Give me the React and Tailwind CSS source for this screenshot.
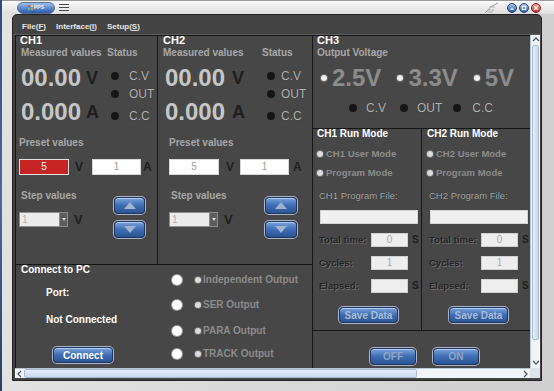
import React from 'react';

const FONT = "font-['Liberation_Sans',Arial,sans-serif]";

function Dot({ className = '' }) {
  return <span className={`block w-[8px] h-[8px] rounded-full bg-[#151515] shrink-0 ${className}`} />;
}

function SmallRadio({ className = '' }) {
  return <span className={`block w-[6px] h-[6px] rounded-full bg-[#dcdcdc] shadow-[0_0_0_1px_#6a6a6a] shrink-0 ${className}`} />;
}

function BlueButton({ className = '', textClass = 'text-white', children }) {
  return (
    <div
      className={`flex items-center justify-center rounded-[4px] border border-[#1d3560] bg-linear-to-b from-[#7aa3dc] via-[#3e6db3] to-[#2b5594] shadow-[inset_0_1px_0_#b4cdef,0_0_0_1px_#aab6c8] font-bold text-[10px] ${textClass} ${className}`}
    >
      {children}
    </div>
  );
}

function Arrow({ up }) {
  return (
    <BlueButton className="w-full h-[17px]">
      <svg width="12" height="7" viewBox="0 0 12 7">
        {up ? <polygon points="6,0 12,7 0,7" fill="#9fb3cc" /> : <polygon points="0,0 12,0 6,7" fill="#9fb3cc" />}
      </svg>
    </BlueButton>
  );
}

function Field({ value, red, className = '' }) {
  return (
    <div
      className={`h-[16px] flex items-center justify-center text-[10px] leading-none border shrink-0 ${
        red ? 'bg-[#c42424] border-[#e2e2e2] text-white' : 'bg-white border-[#d8d8d8] text-[#9c9c9c]'
      } ${className}`}
    >
      {value}
    </div>
  );
}

function Combo() {
  return (
    <div className="w-[49px] h-[15px] flex border border-[#8c8c8c] bg-[#ececec]">
      <span className="flex-1 pl-[2px] text-[10px] leading-[13px] text-[#b0b0b0]">1</span>
      <span className="w-[8px] bg-[#5c5c5c] border-l border-[#8c8c8c] flex items-center justify-center">
        <svg width="4" height="3" viewBox="0 0 4 3">
          <polygon points="0,0 4,0 2,3" fill="#e0e0e0" />
        </svg>
      </span>
    </div>
  );
}

const Label = ({ children, className = '' }) => (
  <div className={`text-[10px] font-bold text-[#a7a7a7] whitespace-nowrap ${className}`}>{children}</div>
);

const channels = {
  CH1: {
    pl: 'pl-[4px]',
    numCol: 'ml-[5px] w-[86px]',
    numRow: 'pl-0',
    unit: 'ml-[5px]',
    dot: 'ml-[4px]',
    stat: 'ml-[10px]',
    bottom: 'ml-[3px]',
    v1: 'ml-[6px]',
    f2: 'ml-[9px]',
    a: 'ml-[2px]',
    left: 'w-[95px]',
    btns: 'w-[31px]',
  },
  CH2: {
    pl: 'pl-[5px]',
    numCol: 'ml-[5px] w-[99px]',
    numRow: 'pl-[2px]',
    unit: 'ml-[7px]',
    dot: 'ml-[5px]',
    stat: 'ml-[6px]',
    bottom: 'ml-[11px]',
    v1: 'ml-[7px]',
    f2: 'ml-[6px]',
    a: 'ml-[4px]',
    left: 'w-[96px]',
    btns: 'w-[32px]',
  },
};

function Channel({ name }) {
  const c = channels[name];
  const red = name === 'CH1';
  return (
    <div className="h-full flex flex-col">
      <div className={`h-[9px] leading-[9px] text-[11px] font-bold text-white ${c.pl}`}>{name}</div>
      <div className="flex">
        <div className={`flex flex-col ${c.numCol}`}>
          <Label className="h-[16px] leading-[16px]">Measured values</Label>
          <div className={`h-[33px] flex items-center ${c.numRow}`}>
            <span className="text-[24px] leading-none font-bold text-[#c6c6c6]">00.00</span>
            <span className={`text-[18px] leading-none font-bold text-[#1e1e1e] ${c.unit}`}>V</span>
          </div>
          <div className={`h-[35px] flex items-center ${c.numRow}`}>
            <span className="text-[24px] leading-none font-bold text-[#c6c6c6]">0.000</span>
            <span className={`text-[18px] leading-none font-bold text-[#1e1e1e] ${c.unit}`}>A</span>
          </div>
        </div>
        <div className="flex flex-col">
          <Label className="h-[16px] leading-[16px]">Status</Label>
          {[
            ['C.V', 'mt-[8px]'],
            ['OUT', 'mt-[4px]'],
            ['C.C', 'mt-[8px]'],
          ].map(([t, m]) => (
            <div key={t} className={`h-[14px] flex items-center ${m}`}>
              <Dot className={c.dot} />
              <span className={`text-[12px] leading-none text-[#b4b4b4] [text-shadow:0_0_1px_#222] ${c.stat}`}>{t}</span>
            </div>
          ))}
        </div>
      </div>
      <div className={`flex flex-col ${c.bottom}`}>
        <Label className="mt-[6px] h-[16px] leading-[16px]">Preset values</Label>
        <div className="mt-[8px] flex items-center">
          <Field value="5" red={red} className="w-[50px]" />
          <span className={`text-[12px] leading-none font-bold text-[#1e1e1e] ${c.v1}`}>V</span>
          <Field value="1" className={`w-[49px] ${c.f2}`} />
          <span className={`text-[12px] leading-none font-bold text-[#1e1e1e] ${c.a}`}>A</span>
        </div>
        <div className="flex">
          <div className={`flex flex-col ${c.left}`}>
            <Label className="mt-[13px] h-[16px] leading-[16px] pl-[2px]">Step values</Label>
            <div className="mt-[8px] flex items-center">
              <Combo />
              <span className="ml-[6px] text-[13px] leading-none font-bold text-[#1e1e1e]">V</span>
            </div>
          </div>
          <div className={`flex flex-col ${c.btns}`}>
            <div className="mt-[22px]">
              <Arrow up />
            </div>
            <div className="mt-[7px]">
              <Arrow />
            </div>
          </div>
        </div>
      </div>
    </div>
  );
}

function CH3() {
  const volts = [
    ['2.5V', 'ml-[4px]'],
    ['3.3V', 'ml-[16px]'],
    ['5V', 'ml-[16px]'],
  ];
  return (
    <div className="h-[92px] flex flex-col pl-[4px]">
      <div className="h-[9px] leading-[9px] text-[11px] font-bold text-white">CH3</div>
      <Label className="h-[16px] leading-[16px]">Output Voltage</Label>
      <div className="h-[33px] flex items-center">
        {volts.map(([v, m]) => (
          <div key={v} className={`flex items-center ${m}`}>
            <SmallRadio className="bg-[#eeeeee]" />
            <span className="ml-[5px] text-[24px] leading-none font-bold text-[#8c8c8c]">{v}</span>
          </div>
        ))}
      </div>
      <div className="mt-[7px] h-[14px] flex items-center text-[12px] leading-none text-[#b4b4b4] [text-shadow:0_0_1px_#222]">
        <Dot className="ml-[32px]" />
        <span className="ml-[9px]">C.V</span>
        <Dot className="ml-[14px]" />
        <span className="ml-[9px]">OUT</span>
        <Dot className="ml-[11px]" />
        <span className="ml-[11px]">C.C</span>
      </div>
    </div>
  );
}

function RunMode({ ch, className = '' }) {
  const rows = [
    ['Total time:', '0', 'mt-[9px]'],
    ['Cycles:', '1', 'mt-[9px]'],
    ['Elapsed:', '', 'mt-[9px]'],
  ];
  return (
    <div className={`w-[108px] h-full flex flex-col ${className}`}>
      <div className="h-[9px] leading-[9px] pl-[4px] text-[10px] font-bold text-white whitespace-nowrap">{ch} Run Mode</div>
      {[
        [`${ch} User Mode`, 'mt-[8px] h-[15px]'],
        ['Program Mode', 'mt-[5px] h-[14px]'],
      ].map(([t, m]) => (
        <div key={t} className={`flex items-center pl-[4px] ${m}`}>
          <SmallRadio className="bg-[#cfcfcf]" />
          <span className="ml-[3px] text-[9.5px] font-bold leading-none text-[#8c8c8c] whitespace-nowrap">{t}</span>
        </div>
      ))}
      <div className="mt-[9px] h-[14px] leading-[14px] pl-[6px] text-[9.5px] text-[#a9a9a9] [text-shadow:0_0_1px_#222] whitespace-nowrap">
        {ch} Program File:
      </div>
      <div className="mt-[7px] ml-[7px] w-[98px] h-[14px] bg-[#f1f1f1] border border-[#d6d6d6]" />
      {rows.map(([t, v, m]) => (
        <div key={t} className={`flex items-center h-[14px] ${m}`}>
          <span className="pl-[6px] w-[58px] text-[9.5px] font-bold leading-none text-[#242424] [text-shadow:1px_1px_0_#6e6e6e] whitespace-nowrap">
            {t}
          </span>
          <div className="w-[37px] h-[14px] bg-[#eeeeee] border border-[#d0d0d0] flex items-center justify-center text-[10px] leading-none text-[#a8a8a8]">
            {v}
          </div>
          {t !== 'Cycles:' && <span className="ml-[4px] text-[10px] font-bold leading-none text-[#1f1f1f]">S</span>}
        </div>
      ))}
      <BlueButton className="mt-[14px] ml-[26px] w-[59px] h-[16px]" textClass="text-[#a9bcd6]">
        Save Data
      </BlueButton>
    </div>
  );
}

function Connect() {
  const outs = [
    ['Independent Output', 'mt-[8px]'],
    ['SER Output', 'mt-[11px]'],
    ['PARA Output', 'mt-[12px]'],
    ['TRACK Output', 'mt-[9px]'],
  ];
  return (
    <div className="h-[103px] flex">
      <div className="w-[156px] flex flex-col">
        <div className="h-[10px] leading-[10px] pl-[5px] text-[10px] font-bold text-white">Connect to PC</div>
        <div className="mt-[11px] h-[14px] leading-[14px] pl-[30px] text-[10px] font-bold text-white">Port:</div>
        <div className="mt-[13px] h-[14px] leading-[14px] pl-[30px] text-[10px] font-bold text-white">Not Connected</div>
        <BlueButton className="mt-[20px] ml-[37px] w-[60px] h-[16px]">Connect</BlueButton>
      </div>
      <div className="flex flex-col">
        {outs.map(([t, m]) => (
          <div key={t} className={`h-[14px] flex items-center ${m}`}>
            <span className="block w-[10px] h-[10px] rounded-full bg-white shadow-[0_0_0_1px_#9a9a9a]" />
            <SmallRadio className="ml-[13px] bg-[#cfcfcf]" />
            <span className="ml-[2px] text-[10px] font-bold leading-none text-[#8c8c8c] whitespace-nowrap">{t}</span>
          </div>
        ))}
      </div>
    </div>
  );
}

function Chevron({ dir }) {
  const pts = {
    up: '1,5 4,2 7,5',
    down: '1,2 4,5 7,2',
    left: '5,1 2,4 5,7',
    right: '2,1 5,4 2,7',
  }[dir];
  return (
    <svg width="8" height="8" viewBox="0 0 8 8">
      <polyline points={pts} fill="none" stroke="#4d5a6c" strokeWidth="1.3" />
    </svg>
  );
}

function WinBtn({ kind }) {
  const red = kind === 'close';
  return (
    <div
      className={`w-[10px] h-[10px] rounded-full border flex items-center justify-center ${
        red ? 'border-[#8c1f1f] bg-linear-to-b from-[#f49a9a] to-[#cc2424]' : 'border-[#21427c] bg-linear-to-b from-[#a9c6f0] to-[#2d5ba6]'
      }`}
    >
      <svg width="6" height="6" viewBox="0 0 6 6">
        {kind === 'close' && <path d="M1 1L5 5M5 1L1 5" stroke="white" strokeWidth="1.2" />}
        {kind === 'min' && <path d="M1.5 4.2h3" stroke="white" strokeWidth="1.4" />}
        {kind === 'max' && <rect x="1.3" y="1.3" width="3.4" height="3.4" fill="none" stroke="white" strokeWidth="1" />}
      </svg>
    </div>
  );
}

export default function App() {
  return (
    <div className={`w-[554px] h-[391px] overflow-hidden flex bg-[#dadada] ${FONT}`}>
      <div className="w-[2px] h-full bg-linear-to-b from-[#2d4b7e] via-[#4d6c9c] to-[#2a3f66]" />
      <div className="w-[552px] h-full flex flex-col bg-linear-to-r from-[#e2e2e2] via-[#d8d8d8] to-[#cfcfcf]">
        {/* title bar */}
        <div className="h-[14px] flex items-center bg-linear-to-b from-[#fbfbfb] to-[#dedede] border-t border-[#9a9a9a]">
          <div className="ml-[15px] w-[38px] h-[12px] rounded-full border border-[#5d7396] bg-linear-to-b from-[#9cc0ef] to-[#2a5aa8] shadow-[0_0_0_1px_#f2f2f2] flex items-center justify-center gap-[1px]">
            <div className="grid grid-cols-2 gap-[1px]">
              <span className="block w-[2px] h-[2px] bg-[#f04a3a]" />
              <span className="block w-[2px] h-[2px] bg-[#f5c542]" />
              <span className="block w-[2px] h-[2px] bg-[#5cc45c]" />
              <span className="block w-[2px] h-[2px] bg-[#f08a30]" />
            </div>
            <span className="text-[5px] leading-none font-bold text-[#e8f0ff]">PPS</span>
          </div>
          <div className="ml-[4px] flex flex-col gap-[2px]">
            <span className="block w-[10px] h-[1px] bg-[#4a4a4a]" />
            <span className="block w-[10px] h-[1px] bg-[#4a4a4a]" />
            <span className="block w-[10px] h-[1px] bg-[#4a4a4a]" />
          </div>
          <div className="flex-1" />
          <svg width="16" height="12" viewBox="0 0 16 12" className="mr-[8px]">
            <path d="M2 11 Q8 3 15 1" fill="none" stroke="#9a9a9a" strokeWidth="1" />
            <path d="M5 8h6M4 10h6M7 5h5" stroke="#a5a5a5" strokeWidth="0.8" />
          </svg>
          <div className="flex gap-[2px] mr-[13px]">
            <WinBtn kind="min" />
            <WinBtn kind="max" />
            <WinBtn kind="close" />
          </div>
        </div>

        <div className="flex">
          <div className="w-[10px]" />
          <div className="w-[530px] h-[367px] border border-[#222] rounded-t-[5px] bg-[#434343] flex flex-col">
            {/* menu */}
            <div className="h-[19px] pt-[4px] pl-[9px] flex gap-[10px] text-[8px] leading-[15px] font-bold text-[#e6e6e6]">
              <span>
                File(<span className="underline">F</span>)
              </span>
              <span>
                Interface(<span className="underline">I</span>)
              </span>
              <span>
                Setup(<span className="underline">S</span>)
              </span>
            </div>
            <div className="h-[1px] bg-[#5e5e5e]" />

            <div className="flex h-[333px] pl-[2px]">
              <div className="w-[515px] h-[333px] border-t border-l border-[#161616] bg-[#474747] flex">
                <div className="w-[296px] flex flex-col">
                  <div className="h-[228px] flex">
                    <div className="w-[141px]">
                      <Channel name="CH1" />
                    </div>
                    <div className="w-[155px] border-l border-[#161616]">
                      <Channel name="CH2" />
                    </div>
                  </div>
                  <div className="h-[104px] border-t border-[#161616]">
                    <Connect />
                  </div>
                </div>
                <div className="w-[218px] border-l border-[#161616] flex flex-col">
                  <CH3 />
                  <div className="h-[202px] border-t border-[#161616] flex">
                    <RunMode ch="CH1" />
                    <RunMode ch="CH2" className="w-[109px] border-l border-[#161616] pl-[1px]" />
                  </div>
                  <div className="h-[38px] border-t border-[#161616] flex items-start pt-[17px] pl-[57px] gap-[17px]">
                    <BlueButton className="w-[46px] h-[17px]" textClass="text-[#8fa6c6]">
                      OFF
                    </BlueButton>
                    <BlueButton className="w-[46px] h-[17px]" textClass="text-[#8fa6c6]">
                      ON
                    </BlueButton>
                  </div>
                </div>
              </div>
              {/* vertical scrollbar */}
              <div className="w-[10px] h-[333px] bg-[#f1f4f9] border-l border-[#b9c6d8] flex flex-col">
                <div className="h-[10px] flex items-center justify-center">
                  <Chevron dir="up" />
                </div>
                <div className="h-[295px] mx-[1px] rounded-[2px] border border-[#aabcd6] bg-linear-to-r from-[#e6eef9] to-[#c8d8ee]" />
                <div className="flex-1" />
                <div className="h-[10px] flex items-center justify-center">
                  <Chevron dir="down" />
                </div>
              </div>
            </div>

            {/* horizontal scrollbar */}
            <div className="flex h-[10px] pl-[2px]">
              <div className="w-[515px] bg-[#f1f4f9] border-t border-[#b9c6d8] flex items-center">
                <div className="w-[9px] flex justify-center">
                  <Chevron dir="left" />
                </div>
                <div className="w-[393px] h-full rounded-[2px] border border-[#aabcd6] bg-linear-to-b from-[#e6eef9] to-[#c8d8ee]" />
                <div className="flex-1" />
                <div className="w-[9px] flex justify-center">
                  <Chevron dir="right" />
                </div>
              </div>
              <div className="w-[10px] bg-[#dfe3ea]" />
            </div>
          </div>
        </div>
      </div>
    </div>
  );
}
